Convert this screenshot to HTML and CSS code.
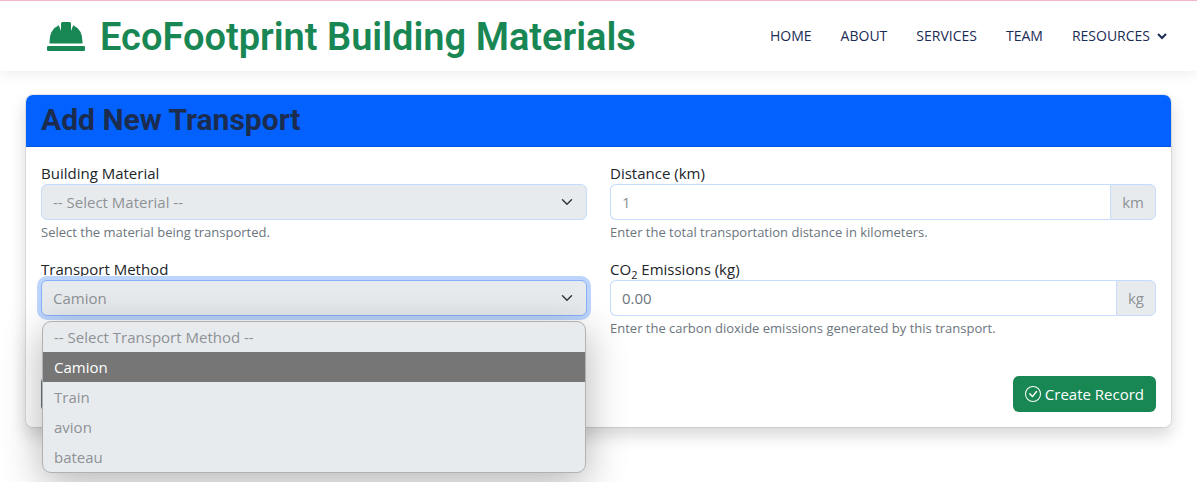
FILE: index.html
```html
<!DOCTYPE html>
<html lang="en">
<head>
<meta charset="utf-8">
<meta name="viewport" content="width=device-width, initial-scale=1">
<title>EcoFootprint Building Materials</title>
<link rel="stylesheet" href="styles.css">
</head>
<body>
<header class="site-header">
  <a class="brand" href="#">
    <svg class="brand-icon" viewBox="0 0 38 29" fill="currentColor" aria-hidden="true">
      <path d="M14 1.500Q14 0 15.500 0H22.500Q24 0 24 1.500V9L26.200 3.300Q35.500 7.500 35.500 20V21.500H2.500V20Q2.500 7.500 11.800 3.300L14 9Z"/>
      <rect y="24" width="38" height="5" rx="1"/>
    </svg>
    <span class="brand-name">EcoFootprint Building Materials</span>
  </a>
  <nav class="nav">
    <a href="#">Home</a>
    <a href="#">About</a>
    <a href="#">Services</a>
    <a href="#">Team</a>
    <a href="#" class="nav-drop">Resources
      <svg class="nav-caret" viewBox="0 0 10 10" fill="none" stroke="currentColor" stroke-width="2" aria-hidden="true"><path d="M1 3L5 7L9 3"/></svg>
    </a>
  </nav>
</header>

<main class="page">
  <section class="card">
    <div class="card-header"><h2 class="card-title">Add New Transport</h2></div>
    <form class="card-body">
      <div class="form-grid">
        <div class="field">
          <label for="material">Building Material</label>
          <select id="material" class="control select"><option>-- Select Material --</option></select>
          <p class="hint">Select the material being transported.</p>
        </div>
        <div class="field">
          <label for="distance">Distance (km)</label>
          <div class="input-group">
            <input id="distance" class="control value-light" type="text" value="1">
            <span class="unit">km</span>
          </div>
          <p class="hint">Enter the total transportation distance in kilometers.</p>
        </div>
        <div class="field">
          <label for="method">Transport Method</label>
          <div class="select-wrap">
            <select id="method" class="control select is-open"><option>Camion</option></select>
            <ul class="options">
              <li>-- Select Transport Method --</li>
              <li class="selected">Camion</li>
              <li>Train</li>
              <li>avion</li>
              <li>bateau</li>
            </ul>
          </div>
        </div>
        <div class="field">
          <label for="emissions">CO<sub>2</sub> Emissions (kg)</label>
          <div class="input-group">
            <input id="emissions" class="control" type="text" placeholder="0.00">
            <span class="unit">kg</span>
          </div>
          <p class="hint">Enter the carbon dioxide emissions generated by this transport.</p>
        </div>
      </div>
      <div class="actions">
        <button type="button" class="btn btn-secondary" aria-label="Back"></button>
        <button type="submit" class="btn btn-success">
          <svg class="btn-icon" viewBox="0 0 16 16" fill="currentColor" aria-hidden="true">
            <path d="M8 15A7 7 0 1 1 8 1a7 7 0 0 1 0 14m0 1A8 8 0 1 0 8 0a8 8 0 0 0 0 16"/>
            <path d="m10.970 4.970-.02.022-3.473 4.425-2.093-2.094a.75.75 0 0 0-1.060 1.060L6.970 11.030a.75.75 0 0 0 1.079-.02l3.992-4.990a.75.75 0 0 0-1.071-1.050"/>
          </svg>
          Create Record
        </button>
      </div>
    </form>
  </section>
</main>
</body>
</html>
```
FILE: styles.css
```css
* { box-sizing: border-box; }

body {
  margin: 0;
  min-height: 100vh;
  background: #fff;
  color: #212529;
  font: 15px/22px "Open Sans", "Noto Sans", sans-serif;
}

.site-header {
  display: flex;
  align-items: center;
  justify-content: space-between;
  padding: 12px 30px 12px 47px;
  border-top: 1px solid #f5b5c8;
  box-shadow: 0 0 16px rgba(0, 0, 0, 0.1);
}

.brand {
  display: flex;
  align-items: center;
  gap: 15px;
  color: #198754;
  text-decoration: none;
}
.brand-icon { width: 38px; height: 29px; }
.brand-name {
  padding-top: 2px;
  font: 600 38px/44px Roboto, sans-serif;
}

.nav { display: flex; gap: 29px; }
.nav a {
  color: #1b2c55;
  font-size: 14px;
  text-transform: uppercase;
  text-decoration: none;
}
.nav-drop { display: flex; align-items: center; gap: 7px; }
.nav-caret { width: 10px; height: 10px; }

.page { padding: 23px 25px; }

.card {
  background: #fff;
  background-clip: padding-box;
  border: 1px solid rgba(0, 0, 0, 0.08);
  border-radius: 8px;
  box-shadow: 0 8px 16px rgba(0, 0, 0, 0.15);
}
.card-header {
  padding: 6px 15px 8px;
  background: #0362ff;
  border-bottom: 1px solid #0256dd;
  border-radius: 7px 7px 0 0;
}
.card-title {
  margin: 0;
  color: #1b2c4f;
  font: 700 30px/37px Roboto, sans-serif;
}
.card-body { padding: 15px; }

.form-grid {
  display: grid;
  grid-template-columns: 1fr 1fr;
  gap: 16px 23px;
}
.field { display: flex; flex-direction: column; min-width: 0; }
.field sub { font-size: 11px; line-height: 0; }

.control {
  width: 100%;
  height: 36px;
  padding: 6px 11px;
  color: #6c757d;
  background-color: #fff;
  border: 1px solid #c5dcfd;
  border-radius: 6px;
  font: inherit;
  outline: 0;
}
.control::placeholder { color: #6c757d; opacity: 1; }
.value-light { color: #8e9296; }
.select {
  appearance: none;
  color: #8e9296;
  background: #e8ebee url("data:image/svg+xml,%3Csvg xmlns='http://www.w3.org/2000/svg' viewBox='0 0 16 16'%3E%3Cpath fill='none' stroke='%23343a40' stroke-linecap='round' stroke-linejoin='round' stroke-width='2' d='m2 5 6 6 6-6'/%3E%3C/svg%3E") no-repeat right 13px center / 12px 12px;
}
.select.is-open {
  border-color: #86b0fb;
  box-shadow: 0 0 0 4px #bdd5fd;
}

.select-wrap { position: relative; }
.options {
  position: absolute;
  z-index: 2;
  top: calc(100% + 5px);
  left: 1px;
  right: 1px;
  margin: 0;
  padding: 0;
  list-style: none;
  color: #8e9296;
  background: #e8ebee;
  border: 1px solid #b0b1b2;
  border-radius: 9px;
  box-shadow: 0 10px 40px rgba(0, 0, 0, 0.3);
}
.options li { padding: 4px 11px; }
.options .selected { color: #fff; background: #767676; font-weight: 500; }

.input-group { display: flex; }
.input-group .control {
  flex: 1;
  min-width: 0;
  border-radius: 6px 0 0 6px;
  border-right: 0;
}
.unit {
  padding: 6px 11px;
  color: #8e9296;
  background: #e8ebee;
  border: 1px solid #c5dcfd;
  border-radius: 0 6px 6px 0;
}

.hint {
  margin: 2px 0 0;
  color: #6c757d;
  font-size: 13px;
  line-height: 20px;
}

.actions {
  display: flex;
  justify-content: space-between;
  margin-top: 38px;
}
.btn {
  display: flex;
  align-items: center;
  gap: 4px;
  padding: 7px 12px;
  color: #fff;
  border: 0;
  border-radius: 6px;
  font: 500 15px/22px "Open Sans", "Noto Sans", sans-serif;
}
.btn-success { background: #198754; }
.btn-secondary { width: 80px; background: #6c757d; }
.btn-icon { width: 16px; height: 16px; }
```
